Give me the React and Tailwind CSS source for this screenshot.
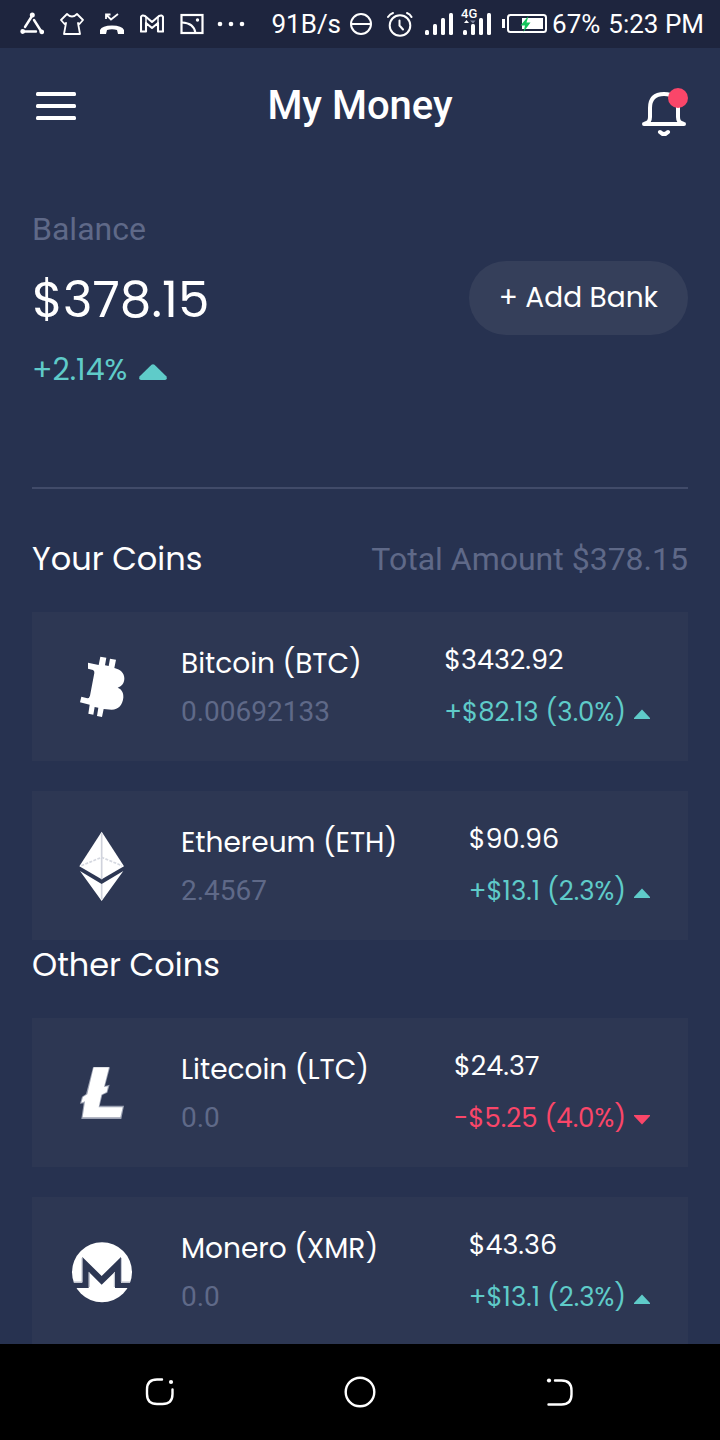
import React from "react";

const BITCOIN = (
  <svg viewBox="0 4 270 270" className="size-[90px] shrink-0" fill="#fff" aria-hidden="true">
    <path d="M84 66 L116 73 L121 48 L139 51 L135 74 L146 76 L150 54 L168 57 L163 82 C182 87 193 97 193 113 C193 127 186 137 173 141 C186 146 191 157 190 171 C187 194 176 206 155 207 L131 205 L126 229 L111 226 L115 201 L104 199 L100 222 L85 219 L89 192 L60 185 L64 168 L82 173 Q88 173 90 165 L103 97 Q104 91 99 88 L84 84 Z" />
  </svg>
);

const ETHEREUM = (
  <svg viewBox="0 1 270 270" className="size-[90px] shrink-0" fill="#fff" aria-hidden="true">
    <path d="M125 33 L192 137 L125 176 L58 137 Z" />
    <path d="M60 151 L125 190 L190 151 L125 241 Z" />
    <path d="M125 38 V176 M125 190 V236" stroke="#cfd2dc" strokeWidth="5" fill="none" />
    <path d="M64 135 L125 110 L186 135" stroke="#d5d8e0" strokeWidth="5" strokeDasharray="9 4" fill="none" />
  </svg>
);

const LITECOIN = (
  <svg viewBox="0 -7 270 270" className="size-[90px] shrink-0" aria-hidden="true">
    <path
      d="M99 51 H150 L135 107 L149 103 L142 127 L127 134 L119 166 H192 L184 206 H64 L71 159 L60 160 L66 139 L78 131 Z"
      fill="#9ba1b2"
    />
    <path d="M101 51 H147 L132 110 L144 108 L140 125 L124 133 L116 171 H188 L181 201 H68 L75 153 L64 157 L69 140 L82 132 Z" fill="#fff" />
  </svg>
);

const MONERO = (
  <svg viewBox="0 -11 270 270" className="size-[90px] shrink-0" aria-hidden="true">
    <circle cx="126" cy="125" r="90" fill="#fff" />
    <path d="M30 156 H67 V79 L125 136 L183 79 V156 H222 V172 H165 V123 L125 162 L86 123 V172 H30 Z" fill="#2d3753" />
    <path d="M41 154 H66 V82 M184 82 V154 H210 M88 126 V169 M163 126 V169" stroke="#b9bdca" strokeWidth="3" fill="none" />
  </svg>
);

const yourCoins = [
  { name: "Bitcoin (BTC)", held: "0.00692133", price: "$3432.92", change: "+$82.13 (3.0%)", up: true, icon: BITCOIN },
  { name: "Ethereum (ETH)", held: "2.4567", price: "$90.96", change: "+$13.1 (2.3%)", up: true, icon: ETHEREUM },
];

const otherCoins = [
  { name: "Litecoin (LTC)", held: "0.0", price: "$24.37", change: "-$5.25 (4.0%)", up: false, icon: LITECOIN },
  { name: "Monero (XMR)", held: "0.0", price: "$43.36", change: "+$13.1 (2.3%)", up: true, icon: MONERO },
];

function CoinCard({ coin }) {
  return (
    <li className="flex h-[149px] items-center bg-[#2d3753] pr-[38px] pl-7">
      {coin.icon}
      <div className="ml-[31px] flex-1 pt-[3px] whitespace-nowrap">
        <h3 className="text-[28px] leading-12">{coin.name}</h3>
        <p className="font-[Roboto,sans-serif] text-[28px] leading-12 text-[#5f6988]">{coin.held}</p>
      </div>
      <div className="pb-[2px] whitespace-nowrap">
        <p className="text-[27px] leading-[52px]">{coin.price}</p>
        <p className={`flex items-center gap-2 text-[26px] leading-[52px] ${coin.up ? "text-[#5fcbc9]" : "text-[#fa4669]"}`}>
          {coin.change}
          <svg viewBox="0 0 16 10" className="mt-1 h-[10px] w-4" fill="currentColor" aria-hidden="true">
            {coin.up ? <path d="M8 0.5 L16 9 V10 H0 V9 Z" /> : <path d="M8 9.5 L16 1 V0 H0 V1 Z" />}
          </svg>
        </p>
      </div>
    </li>
  );
}

function StatusBar() {
  return (
    <div className="flex h-12 shrink-0 items-center justify-between bg-[#1e253e] pr-4 pl-5 font-[Roboto,sans-serif] text-[26px] whitespace-nowrap">
      <div className="flex items-center gap-3">
        <div className="flex items-center gap-4">
          <svg viewBox="20 12 24 24" className="size-6" fill="none" stroke="#fff" strokeWidth="2.4" strokeLinecap="round" aria-hidden="true">
            <path d="M32 16 L25 27 M34 20 L41 31 M23 31.5 H36" />
            <circle cx="32.3" cy="15" r="1.3" fill="#fff" />
            <circle cx="22.7" cy="31.5" r="1.2" fill="#fff" />
            <circle cx="41.7" cy="31.8" r="1.2" fill="#fff" />
          </svg>
          <svg viewBox="60 12 24 24" className="size-6" fill="none" stroke="#fff" strokeWidth="1.8" strokeLinejoin="round" aria-hidden="true">
            <path d="M67 14 Q72 19 77 14 L83 20 L79.5 24 L78 23 L80 34 H64 L66 23 L64.5 24 L61 20 Z" />
          </svg>
          <svg viewBox="100 12 24 24" className="size-6" fill="none" stroke="#fff" strokeWidth="1.8" aria-hidden="true">
            <path d="M106 19 V14.5 H110.5 M106.5 15 L111 19.5 L118 14" />
            <path d="M100 34 V30 Q102 25.500 112 25.500 Q122 25.500 124 30 V34 H118 L117 30 Q112 28.500 107 30 L106 34 Z" fill="#fff" stroke="none" />
          </svg>
          <svg viewBox="140 12 24 24" className="size-6" fill="none" stroke="#fff" strokeWidth="2.1" strokeLinejoin="round" aria-hidden="true">
            <path d="M141 17 Q142 14.5 145 16 L152 22 L159 16 Q162 14.5 163 17 V31.500 H158 V23 L152 28 L146 23 V31.500 H141 Z" />
            <path d="M146 23 V17 M158 23 V17" strokeWidth="1.5" />
          </svg>
          <svg viewBox="180 12 24 24" className="size-6" fill="none" stroke="#fff" strokeWidth="2.2" aria-hidden="true">
            <rect x="181.5" y="15" width="21" height="18" />
            <path d="M182 22.5 Q194 23 195.500 33" strokeWidth="2" />
            <circle cx="197.5" cy="20" r="1.7" fill="#fff" stroke="none" />
          </svg>
        </div>
        <svg viewBox="216 8 30 28" className="h-7 w-[30px]" fill="#fff" aria-hidden="true">
          <circle cx="220" cy="22" r="2.3" />
          <circle cx="231" cy="22" r="2.3" />
          <circle cx="242" cy="22" r="2.3" />
        </svg>
      </div>
      <div className="flex items-center">
        <span className="mr-2">91B/s</span>
        <svg viewBox="348 12 24 24" className="mr-3.5 size-6" fill="none" stroke="#fff" strokeWidth="2" aria-hidden="true">
          <circle cx="360" cy="24" r="10" />
          <path d="M351 24 H369" />
        </svg>
        <svg viewBox="386 10 26 28" className="mr-3 h-7 w-[26px]" fill="none" stroke="#fff" strokeWidth="2" strokeLinecap="round" aria-hidden="true">
          <circle cx="399" cy="25.5" r="10.3" />
          <path d="M398.5 20.5 V25.5 L402 29.5 M387 17 Q389 14 392 13 M406 13 Q409 14 410.5 17" />
        </svg>
        <svg viewBox="424 10 28 28" className="mr-2 size-7" fill="#fff" aria-hidden="true">
          <rect x="424" y="30" width="4" height="5" rx="1.5" />
          <rect x="432" y="24" width="4" height="11" rx="1.5" />
          <rect x="440" y="18" width="4" height="17" rx="1.5" />
          <rect x="448" y="13" width="4" height="22" rx="1.5" />
        </svg>
        <span className="relative mr-2.5">
          <svg viewBox="460 10 31 28" className="h-7 w-[31px]" fill="#fff" aria-hidden="true">
            <rect x="462" y="30" width="4" height="5" rx="1.5" />
            <rect x="470" y="24" width="4" height="11" rx="1.5" />
            <rect x="478" y="18" width="4" height="17" rx="1.5" />
            <rect x="486" y="13" width="4" height="22" rx="1.5" />
            <path d="M463 23 L465.5 20 L468 23 Z" />
            <path d="M469 20.5 H474.5 L472 23.5 Z" fill="#8087a0" />
          </svg>
          <span className="absolute -top-1 left-0 text-[13px] leading-4 font-medium">4G</span>
        </span>
        <svg viewBox="501 10 46 28" className="mr-1 h-7 w-[46px]" fill="none" stroke="#fff" aria-hidden="true">
          <path d="M502.5 19 V28" strokeWidth="3" />
          <rect x="507" y="15" width="38" height="17" rx="2.5" strokeWidth="2" />
          <rect x="521" y="18" width="21" height="11" fill="#fff" stroke="none" />
          <path d="M527.5 16 L519.5 25.5 H524 L522.5 32 L529.5 22.5 H525.5 Z" fill="#15c45d" stroke="none" />
        </svg>
        <span className="mr-2">67%</span>
        <span>5:23 PM</span>
      </div>
    </div>
  );
}

export default function App() {
  return (
    <div className="flex h-screen flex-col bg-[#273250] font-[Poppins,Inter,sans-serif] text-white">
      <StatusBar />
      <div className="min-h-0 flex-1 overflow-hidden px-8">
        <header className="flex h-[116px] items-center justify-between">
          <button type="button" aria-label="Open menu" className="flex w-12 justify-start pl-1">
            <svg viewBox="0 0 40 28" className="h-7 w-10" fill="#fff" aria-hidden="true">
              <rect width="40" height="4" rx="1.5" />
              <rect y="12" width="40" height="4" rx="1.5" />
              <rect y="24" width="40" height="4" rx="1.5" />
            </svg>
          </button>
          <h1 className="font-[Roboto,sans-serif] text-[40px] leading-12 font-medium">My Money</h1>
          <button type="button" aria-label="Notifications" className="mt-3 flex w-12">
            <svg viewBox="640 86 48 52" className="h-[52px] w-12" fill="none" stroke="#fff" strokeWidth="4" strokeLinecap="round" strokeLinejoin="round" aria-hidden="true">
              <path d="M644 124 H684 M645 123.5 Q650 123 650 117 V108 Q650 94 664 94 Q678 94 678 108 V117 Q678 123 683 123.5" />
              <path d="M660 132 Q664 136 668 132" />
              <circle cx="678" cy="98" r="10" fill="#fa4669" stroke="none" />
            </svg>
          </button>
        </header>

        <main>
          <section className="flex items-center justify-between border-b-2 border-[#414b69] pt-[43px] pb-[94px] whitespace-nowrap">
            <div>
              <p className="font-[Roboto,sans-serif] text-[32px] leading-11 text-[#5f6988]">Balance</p>
              <p className="mt-[13px] text-[50px] leading-[72px]">$378.15</p>
              <p className="mt-[10px] flex items-center gap-3 text-[30px] leading-[47px] text-[#5fcbc9]">
                +2.14%
                <svg viewBox="0 0 28 16" className="mt-1 h-4 w-7" fill="currentColor" aria-hidden="true">
                  <path d="M12.5 .8 Q14 -.3 15.5 .8 L27.5 12.5 Q28.5 16 26 16 H2 Q-.5 16 .5 12.5 Z" />
                </svg>
              </p>
            </div>
            <button type="button" className="mb-1 h-[74px] rounded-full bg-[#353f5a] px-[30px] text-[28px]">
              + Add Bank
            </button>
          </section>

          <section>
            <div className="flex h-[123px] items-center justify-between pt-4 whitespace-nowrap">
              <h2 className="text-[32px] leading-12">Your Coins</h2>
              <p className="font-[Roboto,sans-serif] text-[32px] leading-12 text-[#5f6988]">Total Amount $378.15</p>
            </div>
            <ul className="flex flex-col gap-[30px]">
              {yourCoins.map((coin) => (
                <CoinCard key={coin.name} coin={coin} />
              ))}
            </ul>
          </section>

          <section>
            <h2 className="pb-7 text-[32px] leading-[50px]">Other Coins</h2>
            <ul className="flex flex-col gap-[30px]">
              {otherCoins.map((coin) => (
                <CoinCard key={coin.name} coin={coin} />
              ))}
            </ul>
          </section>
        </main>
      </div>

      <nav aria-label="System" className="flex h-24 shrink-0 items-center justify-between bg-black px-[140px]">
        <button type="button" aria-label="Recent apps" className="size-10">
          <svg viewBox="140 1372 40 40" className="size-10" fill="none" stroke="#fff" strokeWidth="2.4" strokeLinecap="round" aria-hidden="true">
            <path d="M162 1379.5 H157 Q147 1379.5 147 1389.5 V1394 Q147 1404 157 1404 H162.5 Q172.5 1404 172.5 1394 V1389.5" />
            <circle cx="171" cy="1382" r="2.1" fill="#fff" stroke="none" />
          </svg>
        </button>
        <button type="button" aria-label="Home" className="size-10">
          <svg viewBox="340 1372 40 40" className="size-10" fill="none" stroke="#fff" strokeWidth="2.4" aria-hidden="true">
            <circle cx="360" cy="1392" r="14.3" />
          </svg>
        </button>
        <button type="button" aria-label="Back" className="size-10">
          <svg viewBox="540 1372 40 40" className="size-10" fill="none" stroke="#fff" strokeWidth="2.4" strokeLinecap="round" aria-hidden="true">
            <path d="M555 1380.5 H561.5 Q571.5 1380.5 571.5 1390.5 V1394.5 Q571.5 1404.5 561.5 1404.5 H548.5" />
            <circle cx="549" cy="1380.5" r="2.1" fill="#fff" stroke="none" />
          </svg>
        </button>
      </nav>
    </div>
  );
}
